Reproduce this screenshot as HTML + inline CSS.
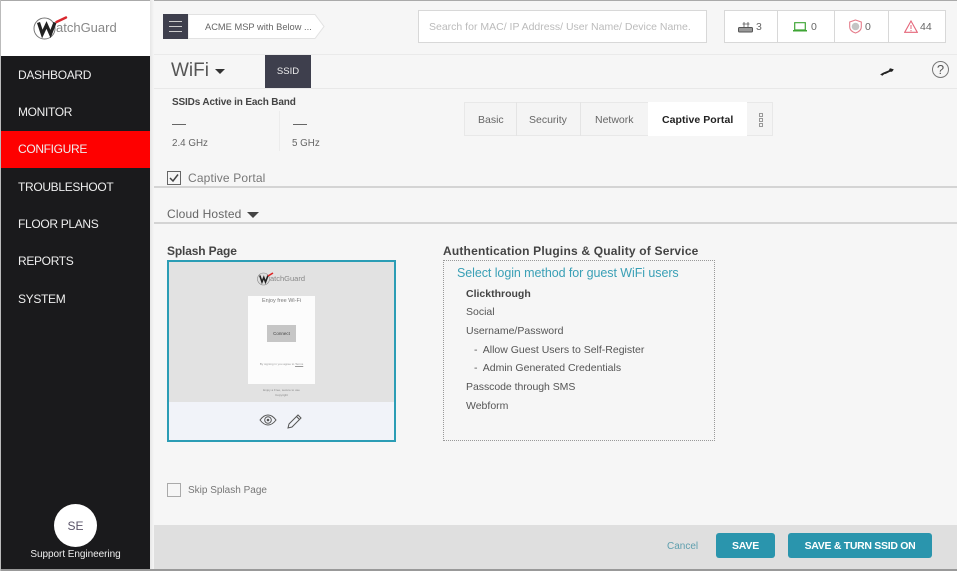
<!DOCTYPE html>
<html><head><meta charset="utf-8">
<style>
html,body{margin:0;padding:0;background:#f6f6f6}
body{width:957px;height:571px;position:relative;overflow:hidden;font-family:"Liberation Sans",sans-serif;color:#555}
#w{position:absolute;left:0;top:0;width:957px;height:571px;filter:blur(.3px)}
.a{position:absolute}
.t{position:absolute;white-space:nowrap;line-height:16px}
.n{position:absolute;left:18px;color:#eee;font-size:12px;letter-spacing:-.33px;line-height:16px;white-space:nowrap}
.box{position:absolute;background:#fff;border:1px solid #d8d8d8;box-sizing:border-box}
</style></head><body><div id="w">
<div class="a" style="left:0;top:0;width:957px;height:1px;background:#aaa"></div>
<div class="a" style="left:0;top:569px;width:957px;height:2px;background:#999"></div>
<div class="a" style="left:0;top:0;width:1px;height:571px;background:#bbb"></div>
<!-- sidebar -->
<div class="a" style="left:1px;top:1px;width:149px;height:55px;background:#fff"></div>
<div class="a" style="left:1px;top:56px;width:149px;height:513px;background:#1a1a1c"></div>
<div class="a" style="left:150px;top:0;width:4px;height:569px;background:linear-gradient(90deg,#e6e6e6,#f6f6f6)"></div>
<div class="t" style="left:56px;top:20px;font-size:13px;color:#888">atchGuard</div>
<svg class="a" style="left:33px;top:14px" width="36" height="28" viewBox="0 0 36 28"><circle cx="11.500" cy="14.500" r="10.500" fill="none" stroke="#777"/><path d="M5.500 8.500L9.300 20 13.500 11 17.500 20 22 8.500" fill="none" stroke="#222" stroke-width="3.200"/><path d="M23.500 8L33 3.500" stroke="#d9272e" stroke-width="2.400" stroke-linecap="round"/></svg>
<div class="n" style="top:67px">DASHBOARD</div>
<div class="n" style="top:104px">MONITOR</div>
<div class="a" style="left:1px;top:131px;width:149px;height:37px;background:#fe0000"></div>
<div class="n" style="top:141px">CONFIGURE</div>
<div class="n" style="top:179px">TROUBLESHOOT</div>
<div class="n" style="top:216px">FLOOR PLANS</div>
<div class="n" style="top:253px">REPORTS</div>
<div class="n" style="top:291px">SYSTEM</div>
<div class="a" style="left:54px;top:504px;width:43px;height:43px;border-radius:50%;background:#fff"></div>
<div class="t" style="left:54px;width:43px;text-align:center;top:518px;font-size:12px;color:#5a5468">SE</div>
<div class="t" style="left:1px;width:149px;text-align:center;top:547px;font-size:10px;letter-spacing:-.05px;color:#eee">Support Engineering</div>
<!-- top -->
<div class="a" style="left:163px;top:14px;width:25px;height:25px;background:#3e3f4d"></div>
<div class="a" style="left:169px;top:21px;width:13px;height:11px;border-top:1px solid #ccc;border-bottom:1px solid #ccc;box-sizing:border-box"></div>
<div class="a" style="left:169px;top:26px;width:13px;height:1px;background:#ccc"></div>
<svg class="a" style="left:188px;top:14px" width="138" height="25"><path d="M0 .5H127L136 12.500 127 24.500H0z" fill="#fff" stroke="#e2e2e2"/></svg>
<div class="t" style="left:205px;top:19px;font-size:9.300px;color:#666">ACME MSP with Below ...</div>
<div class="box" style="left:418px;top:10px;width:289px;height:33px"></div>
<div class="t" style="left:429px;top:19px;font-size:10.500px;color:#bbb">Search for MAC/ IP Address/ User Name/ Device Name.</div>
<div class="box" style="left:724px;top:10px;width:222px;height:33px"></div>
<div class="a" style="left:777px;top:10px;width:1px;height:33px;background:#d8d8d8"></div>
<div class="a" style="left:834px;top:10px;width:1px;height:33px;background:#d8d8d8"></div>
<div class="a" style="left:888px;top:10px;width:1px;height:33px;background:#d8d8d8"></div>
<svg class="a" style="left:738px;top:21px" width="15" height="12"><rect x=".5" y="6.500" width="14" height="4.500" rx="1" fill="#999" stroke="#555"/><path d="M6 6V1M10 6V1M4.500 3h7" stroke="#555" fill="none" stroke-width=".8"/></svg>
<div class="t" style="left:756px;top:19px;font-size:10.500px;color:#666">3</div>
<svg class="a" style="left:793px;top:22px" width="14" height="11"><path d="M1.700 .7h10.600v7.300H1.700z" fill="none" stroke="#3fa535" stroke-width="1.200"/><path d="M0 8h14v1.500H0z" fill="#3fa535"/></svg>
<div class="t" style="left:811px;top:19px;font-size:10.500px;color:#666">0</div>
<svg class="a" style="left:849px;top:19px" width="13" height="15"><path d="M6.500 1L12.300 3V8C12.300 11 9.500 13 6.500 14 3.500 13 .7 11 .7 8V3z" fill="#fff" stroke="#e57d8b" stroke-width="1.100"/><circle cx="6.500" cy="7.500" r="3.800" fill="#c4c4c4"/></svg>
<div class="t" style="left:865px;top:19px;font-size:10.500px;color:#666">0</div>
<svg class="a" style="left:904px;top:20px" width="14" height="13"><path d="M7 1L13.300 12.300H.7z" fill="none" stroke="#e5677b" stroke-width="1.100"/><path d="M7 5v4M7 10v1.200" stroke="#e5677b"/></svg>
<div class="t" style="left:920px;top:19px;font-size:10.500px;color:#666">44</div>
<div class="a" style="left:154px;top:54px;width:803px;height:1px;background:#eaeaea"></div>
<div class="a" style="left:154px;top:88px;width:803px;height:1px;background:#e8e8e8"></div>
<!-- title row -->
<div class="t" style="left:171px;top:60px;font-size:19px;line-height:22px;color:#555">WiFi</div>
<div class="a" style="left:215px;top:69px;border-left:5px solid transparent;border-right:5px solid transparent;border-top:5px solid #333"></div>
<div class="a" style="left:265px;top:55px;width:46px;height:33px;background:#3e3f4d"></div>
<div class="t" style="left:265px;width:46px;text-align:center;top:64px;font-size:9.500px;color:#eee">SSID</div>
<svg class="a" style="left:879px;top:66px" width="17" height="11"><path d="M1.500 8.500L4 7 10 4.500 11 2.500 14.500 3.500 13 5.500 11 5.500 7 7.500 5 8 3.500 9.500z" fill="#222" stroke="#222" stroke-width=".5"/></svg>
<div class="a" style="left:932px;top:61px;width:15px;height:15px;border:1px solid #777;border-radius:50%;text-align:center;font-size:13px;line-height:15px;color:#555">?</div>
<!-- ssid band -->
<div class="t" style="left:172px;top:95px;font-size:10px;letter-spacing:-.15px;font-weight:bold;color:#444">SSIDs Active in Each Band</div>
<div class="a" style="left:172px;top:124px;width:14px;height:1px;background:#666"></div>
<div class="a" style="left:293px;top:124px;width:14px;height:1px;background:#666"></div>
<div class="a" style="left:279px;top:111px;width:1px;height:40px;background:#ececec"></div>
<div class="t" style="left:172px;top:136px;font-size:9.800px;color:#666">2.4 GHz</div>
<div class="t" style="left:292px;top:136px;font-size:9.800px;color:#666">5 GHz</div>
<!-- tabs -->
<div class="a" style="left:464px;top:102px;width:309px;height:34px;background:#f4f4f4;border:1px solid #e8e8e8;box-sizing:border-box"></div>
<div class="a" style="left:516px;top:102px;width:1px;height:34px;background:#e4e4e4"></div>
<div class="a" style="left:580px;top:102px;width:1px;height:34px;background:#e4e4e4"></div>
<div class="a" style="left:648px;top:102px;width:99px;height:34px;background:#fff"></div>
<div class="t" style="left:478px;top:112px;font-size:10.500px;color:#666">Basic</div>
<div class="t" style="left:529px;top:112px;font-size:10.500px;color:#666">Security</div>
<div class="t" style="left:595px;top:112px;font-size:10.500px;color:#666">Network</div>
<div class="t" style="left:662px;top:112px;font-size:10.500px;letter-spacing:.05px;font-weight:bold;color:#222">Captive Portal</div>
<div class="a" style="left:759px;top:113px;width:2px;height:2px;border:1px solid #999"></div>
<div class="a" style="left:759px;top:118px;width:2px;height:2px;border:1px solid #999"></div>
<div class="a" style="left:759px;top:123px;width:2px;height:2px;border:1px solid #999"></div>
<!-- captive -->
<div class="a" style="left:167px;top:171px;width:12px;height:12px;border:1px solid #666"></div>
<svg class="a" style="left:167px;top:171px" width="14" height="14"><path d="M3 7l3 3 5-6.500" fill="none" stroke="#444" stroke-width="1.500"/></svg>
<div class="t" style="left:188px;top:170px;font-size:12px;letter-spacing:.15px;color:#777">Captive Portal</div>
<div class="a" style="left:154px;top:186px;width:803px;height:2px;background:#d4d4d4"></div>
<div class="t" style="left:167px;top:206px;font-size:12px;letter-spacing:.15px;color:#666">Cloud Hosted</div>
<div class="a" style="left:247px;top:212px;border-left:6px solid transparent;border-right:6px solid transparent;border-top:6px solid #444"></div>
<div class="a" style="left:154px;top:222px;width:803px;height:2px;background:#d4d4d4"></div>
<!-- splash -->
<div class="t" style="left:167px;top:243px;font-size:12px;letter-spacing:-.15px;font-weight:bold;color:#444">Splash Page</div>
<div class="a" style="left:167px;top:260px;width:229px;height:182px;border:2px solid #2b9db5;box-sizing:border-box;background:#f1f3f9"></div>
<div class="a" style="left:169px;top:262px;width:225px;height:140px;background:#e2e2e2"></div>
<div class="t" style="left:270px;top:271px;font-size:7.500px;color:#888">atchGuard</div>
<svg class="a" style="left:257px;top:270px" width="18" height="16"><circle cx="6.500" cy="9" r="6" fill="#ddd" stroke="#888" stroke-width=".6"/><path d="M2.800 5.500L5 12 6.800 7.500 8.500 12 11 5.500" fill="none" stroke="#222" stroke-width="1.600"/><path d="M11 6l5-3" stroke="#d22" stroke-width="1.600"/></svg>
<div class="a" style="left:248px;top:296px;width:67px;height:88px;background:#fcfcfc"></div>
<div class="t" style="left:248px;width:67px;text-align:center;top:293px;font-size:5.500px;color:#777">Enjoy free Wi-Fi</div>
<div class="a" style="left:267px;top:325px;width:29px;height:17px;background:#c6c6c6"></div>
<div class="t" style="left:267px;width:29px;text-align:center;top:326px;font-size:4.500px;color:#444">Connect</div>
<div class="t" style="left:248px;width:67px;text-align:center;top:356px;font-size:3px;color:#999">By signing in you agree to <u>Terms</u></div>
<div class="t" style="left:248px;width:67px;text-align:center;top:382px;font-size:3px;color:#888">Enjoy a Free, secure to use</div>
<div class="t" style="left:248px;width:67px;text-align:center;top:387px;font-size:3px;color:#888">Copyright</div>
<svg class="a" style="left:259px;top:413px" width="18" height="14"><path d="M1 7C4 3 7 2 9 2s5 1 8 5C14 11 11 12 9 12S4 11 1 7z" fill="none" stroke="#555"/><circle cx="9" cy="7" r="3.300" fill="none" stroke="#555"/><circle cx="9" cy="7" r="1.300" fill="#555"/></svg>
<svg class="a" style="left:287px;top:413px" width="16" height="16"><path d="M2 11L11 2l3 3-9 9-4 1z" fill="none" stroke="#555"/><path d="M9.500 3.500l3 3" stroke="#555"/></svg>
<!-- auth -->
<div class="t" style="left:443px;top:243px;font-size:12px;letter-spacing:.19px;font-weight:bold;color:#444">Authentication Plugins &amp; Quality of Service</div>
<div class="a" style="left:443px;top:260px;width:272px;height:181px;border:1px dotted #999;box-sizing:border-box"></div>
<div class="t" style="left:457px;top:265px;font-size:12.500px;letter-spacing:-.07px;color:#3aa0b6">Select login method for guest WiFi users</div>
<div class="t" style="left:466px;top:286px;font-size:10.500px;font-weight:bold;color:#444">Clickthrough</div>
<div class="t" style="left:466px;top:304px;font-size:10.500px;color:#555">Social</div>
<div class="t" style="left:466px;top:323px;font-size:10.500px;color:#555">Username/Password</div>
<div class="t" style="left:474px;top:342px;font-size:10.500px;color:#555">-&nbsp; Allow Guest Users to Self-Register</div>
<div class="t" style="left:474px;top:360px;font-size:10.500px;color:#555">-&nbsp; Admin Generated Credentials</div>
<div class="t" style="left:466px;top:379px;font-size:10.500px;letter-spacing:-.05px;color:#555">Passcode through SMS</div>
<div class="t" style="left:466px;top:398px;font-size:10.500px;color:#555">Webform</div>
<!-- skip -->
<div class="a" style="left:167px;top:483px;width:12px;height:12px;border:1px solid #aaa"></div>
<div class="t" style="left:188px;top:483px;font-size:10px;color:#777">Skip Splash Page</div>
<!-- footer -->
<div class="a" style="left:154px;top:525px;width:803px;height:44px;background:#dfdfdf"></div>
<div class="t" style="left:667px;top:539px;font-size:10px;color:#5f9fae">Cancel</div>
<div class="a" style="left:716px;top:533px;width:59px;height:25px;border-radius:3px;background:#2a95ad;color:#fff;font-size:10.500px;letter-spacing:-.2px;font-weight:bold;text-align:center;line-height:26px">SAVE</div>
<div class="a" style="left:788px;top:533px;width:144px;height:25px;border-radius:3px;background:#2a95ad;color:#fff;font-size:10.500px;letter-spacing:-.3px;font-weight:bold;text-align:center;line-height:26px">SAVE &amp; TURN SSID ON</div>
</div></body></html>
